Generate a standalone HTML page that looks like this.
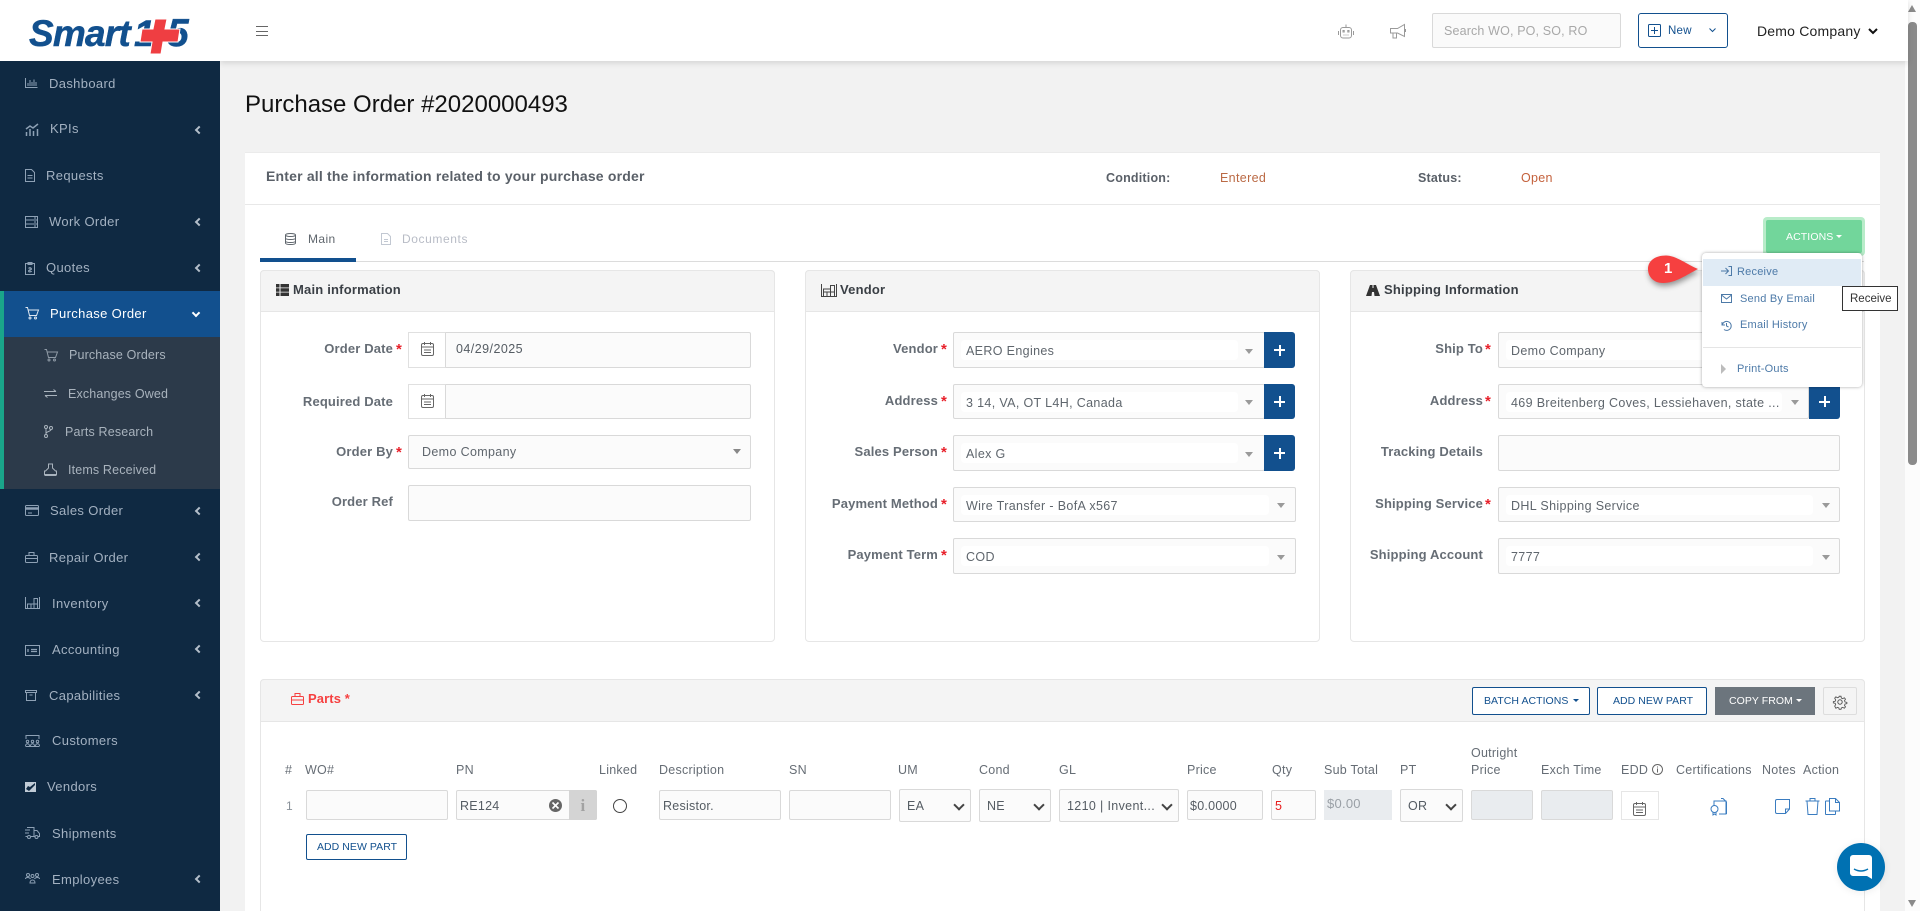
<!DOCTYPE html>
<html lang="en"><head><meta charset="utf-8"><title>Purchase Order #2020000493</title>
<style>
*{box-sizing:border-box}
html,body{margin:0;padding:0;width:1920px;height:911px;overflow:hidden;background:#f2f2f2;font-family:"Liberation Sans",Arial,sans-serif;font-size:13px;letter-spacing:.25px}
div,span{position:absolute}
#root{left:0;top:0;width:1920px;height:911px;overflow:hidden;background:#f2f2f2}
.t{white-space:nowrap;line-height:16px;margin-top:-8px}
svg{position:absolute;fill:none;stroke:currentColor;stroke-width:1;overflow:visible}
.sb{color:#a3b1c1;font-size:13px;letter-spacing:.35px}
.sic{color:#8ea1b5}
.sub{color:#a9b3bd;font-size:12.5px;letter-spacing:.15px}
.ch{width:6px;height:6px;border-left:2px solid #b4bfca;border-bottom:2px solid #b4bfca;transform:rotate(45deg)}
.lab{color:#666d75;font-weight:bold;font-size:13px;text-align:right;letter-spacing:.15px}
.star{color:#e8202a;font-weight:bold;font-size:15px;margin-top:-7px;margin-left:-1px}
.inp{background:#fbfbfb;border:1px solid #d9d9d9;border-radius:2px}
.chip{background:#fff;border-radius:4px;height:20px}
.val{color:#5f666d;font-size:12.5px;letter-spacing:.35px}
.arr{width:0;height:0;border-left:4.5px solid transparent;border-right:4.5px solid transparent;border-top:5px solid #9a9a9a}
.plus{background:#12508e;border-radius:0 3px 3px 0;color:#fff}
.plus:before{content:"";position:absolute;left:50%;top:50%;width:11px;height:2px;margin:-1px 0 0 -5.5px;background:#fff}
.plus:after{content:"";position:absolute;left:50%;top:50%;width:2px;height:11px;margin:-5.5px 0 0 -1px;background:#fff}
.panel{background:#fff;border:1px solid #e6e6e6;border-radius:4px}
.phead{background:#f4f4f4;border:1px solid #e6e6e6;border-radius:4px 4px 0 0}
.ptitle{color:#3a3f45;font-weight:bold;font-size:13px;letter-spacing:.2px}
.th{color:#666d75;font-size:12.5px;letter-spacing:.25px}
.rv{color:#555c63;font-size:12.5px}
.sel:after{content:"";position:absolute;right:7px;top:11px;width:6px;height:6px;border-right:2px solid #444;border-bottom:2px solid #444;transform:rotate(45deg)}
.btn{border:1px solid #12508e;border-radius:2px;background:#fff;color:#12508e;font-size:10.5px;letter-spacing:.05px}
.m{color:#4d7aa8;font-size:11px;letter-spacing:.22px}
.car{width:0;height:0;border-left:3px solid transparent;border-right:3px solid transparent;border-top:3.5px solid currentColor}
</style></head><body>
<div id="root">

<!-- main background right scrollbar -->
<div style="left:1905px;top:0;width:15px;height:911px;background:#fcfcfc"></div>
<div style="left:1908px;top:22px;width:9px;height:443px;background:#8a8a8a;border-radius:4px"></div>
<div class="arr" style="left:1908px;top:5px;border-top:0;border-bottom:7px solid #8a8a8a;border-left-width:4.5px;border-right-width:4.5px"></div>
<div class="arr" style="left:1908px;top:900px;border-top:7px solid #8a8a8a"></div>

<!-- top bar -->
<div style="left:220px;top:0;width:1688px;height:61px;background:#fff;box-shadow:0 2px 6px rgba(0,0,0,.13)"></div>
<div style="left:256px;top:26px;width:12px;height:10px;border-top:1px solid #666;border-bottom:1px solid #666"></div>
<div style="left:256px;top:31px;width:12px;height:1px;background:#666"></div>
<svg style="left:1338px;top:24px;color:#9a9a9a" width="16" height="15" viewBox="0 0 16 15"><rect x="2.500" y="3.500" width="11" height="10.500" rx="2.500"/><path d="M8 3.500V.5M.5 7v4M15.500 7v4"/><path d="M5 6.500h1.200v1.500H5zM9.800 6.500H11v1.500H9.800zM5.500 11h1M7.500 11h1M9.500 11h1" stroke-width="1"/></svg>
<svg style="left:1390px;top:24px;color:#9a9a9a" width="16" height="15" viewBox="0 0 16 15"><path d="M.5 4.500h7l7-4v12l-7-3.500h-7zM3 9v5h3.500V9.500M15.500 5v3"/></svg>
<div class="inp" style="left:1432px;top:13px;width:189px;height:35px;background:#fafafa"></div>
<div class="t" style="left:1444px;top:31px;color:#a8a8a8;font-size:12.5px;letter-spacing:.15px">Search WO, PO, SO, RO</div>
<div class="btn" style="left:1638px;top:13px;width:90px;height:35px;border-radius:3px"></div>
<svg style="left:1648px;top:24px;color:#12508e" width="13" height="13" viewBox="0 0 13 13"><rect x=".5" y=".5" width="12" height="12" rx="1"/><path d="M6.500 3v7M3 6.500h7"/></svg>
<div class="t" style="left:1668px;top:31px;color:#12508e;font-size:11.5px">New</div>
<svg style="left:1709px;top:28px;color:#12508e" width="7" height="5" viewBox="0 0 7 5"><path d="M.5 .5l3 3 3-3"/></svg>
<div class="t" style="left:1757px;top:31px;color:#222;font-size:14px;letter-spacing:.2px">Demo Company</div>
<svg style="left:1868px;top:28px;color:#111;stroke-width:2" width="10" height="7" viewBox="0 0 10 7"><path d="M1 1l4 4 4-4"/></svg>

<!-- sidebar -->
<div style="left:0;top:0;width:220px;height:911px;background:#0f2942"></div>
<div style="left:0;top:0;width:220px;height:61px;background:#fff"></div>
<svg style="left:25px;top:15px;stroke:none" width="175" height="42" viewBox="25 15 175 42">
<text x="29" y="46" fill="#12508e" stroke="#12508e" stroke-width=".5" font-family="Liberation Sans" font-weight="bold" font-style="italic" font-size="37" letter-spacing="-.8">Smart</text>
<text x="134" y="46" fill="#12508e" stroke="#12508e" stroke-width=".5" font-family="Liberation Sans" font-weight="bold" font-style="italic" font-size="37">1</text>
<text x="167" y="46" fill="#12508e" stroke="#12508e" stroke-width=".5" font-family="Liberation Sans" font-weight="bold" font-style="italic" font-size="39">5</text>
<path d="M155 19h12l-2 10h15l-2 13h-15l-2 12h-11l2-12h-12l2-13h11z" fill="#ef3e42" stroke="#fff" stroke-width="1"/>
</svg>

<div class="t sb" style="left:49px;top:84px">Dashboard</div>
<svg class="sic" style="left:25px;top:78px" width="13" height="10" viewBox="0 0 13 10"><path d="M.5 0v9.500h12M3 8V5M5 8V2M7 8V4M9 8V1.500M11 8V4"/></svg>
<div class="t sb" style="left:50px;top:129px">KPIs</div>
<svg class="sic" style="left:25px;top:123px" width="15" height="13" viewBox="0 0 15 13"><path d="M1 6l4-3 3 2 5-4M1.500 13V9M5 13V6M8.500 13V8M12.500 13V6" stroke-width="1.500"/></svg>
<div class="t sb" style="left:46px;top:176px">Requests</div>
<svg class="sic" style="left:25px;top:169px" width="10" height="13" viewBox="0 0 10 13"><path d="M.5 .5h6l3 3v9h-9zM2.500 6.500h5M2.500 9h5"/></svg>
<div class="t sb" style="left:49px;top:222px">Work Order</div>
<svg class="sic" style="left:25px;top:216px" width="13" height="12" viewBox="0 0 13 12"><rect x=".5" y=".5" width="12" height="11"/><path d="M.5 4h12M.5 8h12M9 2h2M9 6h2M9 10h2"/></svg>
<div class="t sb" style="left:46px;top:268px">Quotes</div>
<svg class="sic" style="left:25px;top:262px" width="10" height="13" viewBox="0 0 10 13"><path d="M.5 1.500h9v11h-9zM3 .5h4v2H3zM5 5v5M3.500 6.500c0-1 3-1 3 .5s-3 .5-3 2 3 1 3 0"/></svg>
<div class="ch" style="left:196px;top:127px"></div>
<div class="ch" style="left:196px;top:219px"></div>
<div class="ch" style="left:196px;top:265px"></div>

<div style="left:0;top:291px;width:4px;height:198px;background:#1aa58a"></div>
<div style="left:4px;top:291px;width:216px;height:46px;background:#12508e"></div>
<div style="left:4px;top:337px;width:216px;height:152px;background:#2c3a4a"></div>
<div class="t" style="left:50px;top:314px;color:#fff;font-size:13px;letter-spacing:.35px">Purchase Order</div>
<svg style="left:25px;top:307px;color:#dfe8f2" width="14" height="13" viewBox="0 0 14 13"><path d="M.5 .5h2l2 8h7l2-5.500H3.500"/><circle cx="5" cy="11" r="1"/><circle cx="10.500" cy="11" r="1"/></svg>
<div style="left:193px;top:310px;width:6px;height:6px;border-right:2px solid #fff;border-bottom:2px solid #fff;transform:rotate(45deg)"></div>
<div class="t sub" style="left:69px;top:355px">Purchase Orders</div>
<svg style="left:44px;top:349px;color:#8f9aa6" width="14" height="13" viewBox="0 0 14 13"><path d="M.5 .5h2l2 8h7l2-5.500H3.500"/><circle cx="5" cy="11" r="1"/><circle cx="10.500" cy="11" r="1"/></svg>
<div class="t sub" style="left:68px;top:393.500px">Exchanges Owed</div>
<svg style="left:44px;top:389px;color:#a9b3bd" width="13" height="9" viewBox="0 0 13 9"><path d="M0 2.500h12M9.500 .5l2.500 2M13 6.500H1M3.500 8.500L1 6.500"/></svg>
<div class="t sub" style="left:65px;top:431.500px">Parts Research</div>
<svg style="left:44px;top:425px;color:#a9b3bd" width="9" height="13" viewBox="0 0 9 13"><circle cx="2" cy="2" r="1.500"/><circle cx="2" cy="11" r="1.500"/><circle cx="7" cy="3" r="1.500"/><path d="M2 3.500v6M7 4.500c0 2-5 2-5 4"/></svg>
<div class="t sub" style="left:68px;top:470px">Items Received</div>
<svg style="left:44px;top:463px;color:#a9b3bd" width="13" height="13" viewBox="0 0 13 13"><path d="M4.500 1h4v4l3 3h1v3.500H.5V8h1l3-3zM.5 12.500h12"/></svg>

<div class="t sb" style="left:50px;top:511px">Sales Order</div>
<svg class="sic" style="left:25px;top:505px" width="14" height="11" viewBox="0 0 14 11"><rect x=".5" y=".5" width="13" height="10" rx="1"/><path d="M.5 3.500h13" stroke-width="2.500"/><path d="M3 8h4"/></svg>
<div class="t sb" style="left:49px;top:557.500px">Repair Order</div>
<svg class="sic" style="left:25px;top:552px" width="13" height="11" viewBox="0 0 13 11"><rect x=".5" y="3.500" width="12" height="7" rx="1"/><path d="M4 3.500V.5h5v3M.5 6.500h12"/></svg>
<div class="t sb" style="left:52px;top:603.500px">Inventory</div>
<svg class="sic" style="left:25px;top:597px" width="15" height="12" viewBox="0 0 15 12"><path d="M.5 0v12M14.500 0v12M.5 11.500h14M2.500 11V7h10v4M6 7v4M9 7v4M9 7V1.500h3.500V7"/></svg>
<div class="t sb" style="left:52px;top:650px">Accounting</div>
<svg class="sic" style="left:25px;top:645px" width="15" height="11" viewBox="0 0 15 11"><rect x=".5" y=".5" width="14" height="10"/><path d="M3 4v3M3 4v3M6 4.500h6M6 6.500h6" stroke-width="1.300"/></svg>
<div class="t sb" style="left:49px;top:695.500px">Capabilities</div>
<svg class="sic" style="left:25px;top:690px" width="12" height="11" viewBox="0 0 12 11"><path d="M.5 .5h11v2h-11zM1.500 2.500v8h9v-8M4.500 5h3"/></svg>
<div class="t sb" style="left:52px;top:741px">Customers</div>
<svg class="sic" style="left:25px;top:735px" width="15" height="12" viewBox="0 0 15 12"><path d="M1 4V.5h13V4"/><circle cx="2.500" cy="6.500" r="1.200"/><circle cx="7.500" cy="6.500" r="1.200"/><circle cx="12.500" cy="6.500" r="1.200"/><path d="M.5 11c0-3 4-3 4 0M5.500 11c0-3 4-3 4 0M10.500 11c0-3 4-3 4 0M.5 11.500h14"/></svg>
<div class="t sb" style="left:47px;top:787px">Vendors</div>
<svg style="left:25px;top:782px;stroke:none" width="11" height="10" viewBox="0 0 11 10"><rect width="11" height="10" fill="#c0cbd6"/><path d="M1 7l3 2 6-6v-2l-5 4-2-1z" fill="#0f2942"/></svg>
<div class="t sb" style="left:52px;top:833.500px">Shipments</div>
<svg class="sic" style="left:25px;top:827px" width="15" height="12" viewBox="0 0 15 12"><path d="M2 .5h7v9H6M2 9.500H.5M9 3.500h3l2.500 3v3H13M10 9.500H9M0 3h5M0 6h4"/><circle cx="4" cy="10" r="1.500"/><circle cx="11.500" cy="10" r="1.500"/></svg>
<div class="t sb" style="left:52px;top:879.500px">Employees</div>
<svg class="sic" style="left:25px;top:873px" width="15" height="11" viewBox="0 0 15 11"><circle cx="3" cy="2" r="1.500"/><circle cx="7.500" cy="3" r="1.500"/><circle cx="12" cy="2" r="1.500"/><path d="M.5 6c0-2 4-2 5 0M9.500 6c1-2 5-2 5 0M5 10c0-4 5-4 5 0z"/></svg>
<div class="ch" style="left:196px;top:508px"></div>
<div class="ch" style="left:196px;top:554px"></div>
<div class="ch" style="left:196px;top:600px"></div>
<div class="ch" style="left:196px;top:646px"></div>
<div class="ch" style="left:196px;top:692px"></div>
<div class="ch" style="left:196px;top:876px"></div>

<!-- page -->
<div class="t" style="left:245px;top:105px;color:#111;font-size:24px;line-height:30px;margin-top:-15px;letter-spacing:0">Purchase Order #2020000493</div>
<div style="left:245px;top:152px;width:1635px;height:759px;background:#fff;border-top:1px solid #ebebeb"></div>
<div style="left:245px;top:204px;width:1635px;height:1px;background:#e8e8e8"></div>
<div class="t" style="left:266px;top:176px;color:#5a6068;font-weight:bold;font-size:14px;letter-spacing:.19px">Enter all the information related to your purchase order</div>
<div class="t" style="left:1106px;top:178px;color:#5a6068;font-weight:bold;font-size:12.500px;letter-spacing:.2px">Condition:</div>
<div class="t" style="left:1220px;top:178px;color:#bb6a45;font-size:12.500px;letter-spacing:.35px">Entered</div>
<div class="t" style="left:1418px;top:178px;color:#5a6068;font-weight:bold;font-size:12.500px;letter-spacing:.2px">Status:</div>
<div class="t" style="left:1521px;top:178px;color:#c4613c;font-size:12.500px;letter-spacing:.3px">Open</div>

<!-- tabs -->
<div style="left:260px;top:261px;width:1604px;height:1px;background:#dcdcdc"></div>
<div style="left:260px;top:258px;width:96px;height:4px;background:#12508e"></div>
<svg style="left:285px;top:233px;color:#5f666d" width="11" height="12" viewBox="0 0 11 12"><ellipse cx="5.500" cy="2" rx="5" ry="1.500"/><path d="M.5 2v8c0 2 10 2 10 0V2M.5 5c0 2 10 2 10 0M.5 8c0 2 10 2 10 0"/></svg>
<div class="t" style="left:308px;top:239px;color:#5f666d;font-size:12px;letter-spacing:.4px">Main</div>
<svg style="left:381px;top:233px;color:#c2c8d2" width="10" height="12" viewBox="0 0 10 12"><path d="M.5 .5h6l3 3v8h-9zM3 6.500h4M3 8.500h4"/></svg>
<div class="t" style="left:402px;top:239px;color:#b8bcc6;font-size:12px;letter-spacing:.6px">Documents</div>

<!-- Main information -->
<div class="panel" style="left:260px;top:270px;width:515px;height:372px"></div>
<div class="phead" style="left:260px;top:270px;width:515px;height:42px"></div>
<svg style="left:276px;top:284px;stroke:none;fill:#333" width="13" height="12" viewBox="0 0 13 12"><path d="M0 0h3.500v3.500H0zM4.500 0H13v3.500H4.500zM0 4.300h3.500v3.400H0zM4.500 4.300H13v3.400H4.500zM0 8.500h3.500V12H0zM4.500 8.500H13V12H4.500z"/></svg>
<div class="t ptitle" style="left:293px;top:290px">Main information</div>

<div class="t lab" style="left:270px;width:123px;top:349px">Order Date</div><div class="t star" style="left:397px;top:349px">*</div>
<div class="inp" style="left:408px;top:332px;width:343px;height:36px"></div>
<div style="left:408px;top:332px;width:38px;height:36px;background:#fff;border:1px solid #e0e0e0;border-right:1px solid #d9d9d9"></div>
<svg style="left:421px;top:342px;color:#666" width="13" height="14" viewBox="0 0 13 14"><rect x=".5" y="1.500" width="12" height="12" rx="1.500"/><path d="M.5 5h12M3.500 0v3M9.500 0v3M3 8h7M3 10.500h7" /></svg>
<div class="t val" style="left:456px;top:349px;color:#555c63;letter-spacing:.45px">04/29/2025</div>

<div class="t lab" style="left:270px;width:123px;top:401.500px">Required Date</div>
<div class="inp" style="left:408px;top:384px;width:343px;height:35px"></div>
<div style="left:408px;top:384px;width:38px;height:35px;background:#fff;border:1px solid #e0e0e0;border-right:1px solid #d9d9d9"></div>
<svg style="left:421px;top:394px;color:#666" width="13" height="14" viewBox="0 0 13 14"><rect x=".5" y="1.500" width="12" height="12" rx="1.500"/><path d="M.5 5h12M3.500 0v3M9.500 0v3M3 8h7M3 10.500h7"/></svg>

<div class="t lab" style="left:270px;width:123px;top:452px">Order By</div><div class="t star" style="left:397px;top:452px">*</div>
<div class="inp" style="left:408px;top:435px;width:343px;height:34px"></div>
<div class="t val" style="left:422px;top:452px">Demo Company</div>
<div class="arr" style="left:733px;top:449px;border-top-color:#888"></div>

<div class="t lab" style="left:270px;width:123px;top:502px">Order Ref</div>
<div class="inp" style="left:408px;top:485px;width:343px;height:36px"></div>

<!-- Vendor -->
<div class="panel" style="left:805px;top:270px;width:515px;height:372px"></div>
<div class="phead" style="left:805px;top:270px;width:515px;height:42px"></div>
<svg style="left:821px;top:284px;color:#444" width="16" height="13" viewBox="0 0 16 13"><path d="M.5 0v13M15.500 0v13M.5 12.500h15M2.500 12V8h11v4M6 8v4M9.500 8v4M9.500 8V1.500h4V8M2.500 8V5h7"/></svg>
<div class="t ptitle" style="left:840px;top:290px">Vendor</div>

<div class="t lab" style="left:810px;width:128px;top:349px">Vendor</div><div class="t star" style="left:942px;top:349px">*</div>
<div class="inp" style="left:953px;top:332px;width:312px;height:36px"></div>
<div class="chip" style="left:961px;top:340px;width:277px"></div>
<div class="t val" style="left:966px;top:351px">AERO Engines</div>
<div class="arr" style="left:1245px;top:349px"></div>
<div class="plus" style="left:1264px;top:332px;width:31px;height:36px"></div>

<div class="t lab" style="left:810px;width:128px;top:401px">Address</div><div class="t star" style="left:942px;top:401px">*</div>
<div class="inp" style="left:953px;top:384px;width:312px;height:35px"></div>
<div class="chip" style="left:961px;top:392px;width:277px"></div>
<div class="t val" style="left:966px;top:402.500px">3 14, VA, OT L4H, Canada</div>
<div class="arr" style="left:1245px;top:400px"></div>
<div class="plus" style="left:1264px;top:384px;width:31px;height:35px"></div>

<div class="t lab" style="left:810px;width:128px;top:452px">Sales Person</div><div class="t star" style="left:942px;top:452px">*</div>
<div class="inp" style="left:953px;top:435px;width:312px;height:36px"></div>
<div class="chip" style="left:961px;top:443px;width:277px"></div>
<div class="t val" style="left:966px;top:453.500px">Alex G</div>
<div class="arr" style="left:1245px;top:452px"></div>
<div class="plus" style="left:1264px;top:435px;width:31px;height:36px"></div>

<div class="t lab" style="left:810px;width:128px;top:504px">Payment Method</div><div class="t star" style="left:942px;top:504px">*</div>
<div class="inp" style="left:953px;top:487px;width:343px;height:35px"></div>
<div class="chip" style="left:961px;top:495px;width:308px"></div>
<div class="t val" style="left:966px;top:505.500px">Wire Transfer - BofA x567</div>
<div class="arr" style="left:1277px;top:503px"></div>

<div class="t lab" style="left:810px;width:128px;top:555px">Payment Term</div><div class="t star" style="left:942px;top:555px">*</div>
<div class="inp" style="left:953px;top:538px;width:343px;height:36px"></div>
<div class="chip" style="left:961px;top:546px;width:308px"></div>
<div class="t val" style="left:966px;top:556.500px">COD</div>
<div class="arr" style="left:1277px;top:555px"></div>

<!-- Shipping -->
<div class="panel" style="left:1350px;top:270px;width:515px;height:372px"></div>
<div class="phead" style="left:1350px;top:270px;width:515px;height:42px"></div>
<svg style="left:1366px;top:285px;stroke:none;fill:#333" width="14" height="11" viewBox="0 0 14 11"><path d="M4 0h2.500v3h1V0H10l4 11H8.500L8 7H6l-.5 4H0z"/></svg>
<div class="t ptitle" style="left:1384px;top:290px">Shipping Information</div>

<div class="t lab" style="left:1360px;width:123px;top:349px">Ship To</div><div class="t star" style="left:1486px;top:349px">*</div>
<div class="inp" style="left:1498px;top:332px;width:342px;height:36px"></div>
<div class="chip" style="left:1506px;top:340px;width:230px"></div>
<div class="t val" style="left:1511px;top:351px">Demo Company</div>

<div class="t lab" style="left:1360px;width:123px;top:401px">Address</div><div class="t star" style="left:1486px;top:401px">*</div>
<div class="inp" style="left:1498px;top:384px;width:311px;height:35px"></div>
<div class="chip" style="left:1506px;top:392px;width:276px"></div>
<div class="t val" style="left:1511px;top:402.500px">469 Breitenberg Coves, Lessiehaven, state ...</div>
<div class="arr" style="left:1791px;top:400px"></div>
<div class="plus" style="left:1809px;top:384px;width:31px;height:35px"></div>

<div class="t lab" style="left:1360px;width:123px;top:452px">Tracking Details</div>
<div class="inp" style="left:1498px;top:435px;width:342px;height:36px"></div>

<div class="t lab" style="left:1360px;width:123px;top:504px">Shipping Service</div><div class="t star" style="left:1486px;top:504px">*</div>
<div class="inp" style="left:1498px;top:487px;width:342px;height:35px"></div>
<div class="chip" style="left:1506px;top:495px;width:307px"></div>
<div class="t val" style="left:1511px;top:505.500px">DHL Shipping Service</div>
<div class="arr" style="left:1822px;top:503px"></div>

<div class="t lab" style="left:1360px;width:123px;top:555px">Shipping Account</div>
<div class="inp" style="left:1498px;top:538px;width:342px;height:36px"></div>
<div class="chip" style="left:1506px;top:546px;width:307px"></div>
<div class="t val" style="left:1511px;top:556.500px">7777</div>
<div class="arr" style="left:1822px;top:555px"></div>

<!-- Parts -->
<div class="panel" style="left:260px;top:679px;width:1605px;height:240px"></div>
<div class="phead" style="left:260px;top:679px;width:1605px;height:43px"></div>
<svg style="left:291px;top:693px;color:#f64040" width="13" height="12" viewBox="0 0 13 12"><rect x=".5" y="3.500" width="12" height="8" rx="1"/><path d="M4 3.500V.5h5v3M.5 7h12"/></svg>
<div class="t" style="left:308px;top:699px;color:#f64040;font-weight:bold;font-size:13px;letter-spacing:.1px">Parts *</div>

<div class="btn" style="left:1472px;top:687px;width:118px;height:28px"></div>
<div class="t" style="left:1484px;top:701px;color:#12508e;font-size:10.500px;letter-spacing:.05px">BATCH ACTIONS</div>
<div class="car" style="left:1573px;top:699px;color:#12508e"></div>
<div class="btn" style="left:1597px;top:687px;width:110px;height:28px"></div>
<div class="t" style="left:1613px;top:701px;color:#12508e;font-size:10.500px;letter-spacing:.05px">ADD NEW PART</div>
<div style="left:1715px;top:687px;width:100px;height:28px;background:#6c757d"></div>
<div class="t" style="left:1729px;top:701px;color:#fff;font-size:10.500px;letter-spacing:.05px">COPY FROM</div>
<div class="car" style="left:1796px;top:699px;color:#fff"></div>
<div style="left:1823px;top:687px;width:34px;height:28px;background:#f4f4f4;border:1px solid #ddd;border-radius:2px"></div>
<svg style="left:1833px;top:695px;color:#555" width="14" height="14" viewBox="0 0 14 14"><circle cx="7" cy="7" r="2.200"/><path d="M6 .5h2l.4 2 1.500.7 1.800-1 1.300 1.500-1.100 1.700.6 1.500 2 .4v1.400l-2 .4-.6 1.500 1.100 1.700-1.300 1.500-1.800-1-1.500.7-.4 1.500H6l-.4-1.500-1.500-.7-1.800 1L1 11.500l1.100-1.700-.6-1.500-2-.4V6.500l2-.4.6-1.500L1 2.700l1.300-1.500 1.800 1 1.500-.7z" transform="translate(.8 .8) scale(.9)"/></svg>

<!-- table head -->
<div class="t th" style="left:285px;top:770px">#</div>
<div class="t th" style="left:305px;top:770px">WO#</div>
<div class="t th" style="left:456px;top:770px">PN</div>
<div class="t th" style="left:599px;top:770px">Linked</div>
<div class="t th" style="left:659px;top:770px">Description</div>
<div class="t th" style="left:789px;top:770px">SN</div>
<div class="t th" style="left:898px;top:770px">UM</div>
<div class="t th" style="left:979px;top:770px">Cond</div>
<div class="t th" style="left:1059px;top:770px">GL</div>
<div class="t th" style="left:1187px;top:770px">Price</div>
<div class="t th" style="left:1272px;top:770px">Qty</div>
<div class="t th" style="left:1324px;top:770px">Sub Total</div>
<div class="t th" style="left:1400px;top:770px">PT</div>
<div class="t th" style="left:1471px;top:753px">Outright</div>
<div class="t th" style="left:1471px;top:770px">Price</div>
<div class="t th" style="left:1541px;top:770px">Exch Time</div>
<div class="t th" style="left:1621px;top:770px">EDD</div>
<svg style="left:1652px;top:764px;color:#666" width="11" height="11" viewBox="0 0 11 11"><circle cx="5.500" cy="5.500" r="5"/><path d="M5.500 4.500v4M5.500 2.500v1"/></svg>
<div class="t th" style="left:1676px;top:770px">Certifications</div>
<div class="t th" style="left:1762px;top:770px">Notes</div>
<div class="t th" style="left:1803px;top:770px">Action</div>

<!-- row -->
<div class="t" style="left:286px;top:806px;color:#8a929a;font-size:12px">1</div>
<div class="inp" style="left:306px;top:790px;width:142px;height:30px"></div>
<div class="inp" style="left:456px;top:790px;width:141px;height:30px"></div>
<div style="left:569px;top:790px;width:28px;height:30px;background:#d4d4d4;border-radius:0 2px 2px 0"></div>
<div class="t rv" style="left:460px;top:806px">RE124</div>
<div style="left:549px;top:799px;width:13px;height:13px;border-radius:50%;background:#666"></div>
<svg style="left:552px;top:802px;color:#fff;stroke-width:1.600" width="7" height="7" viewBox="0 0 7 7"><path d="M.5 .5l6 6M6.500 .5l-6 6"/></svg>
<div class="t" style="left:579px;top:806px;width:8px;text-align:center;color:#a2a2a2;font-weight:bold;font-size:17px;font-family:'Liberation Serif',serif">i</div>
<div style="left:613px;top:799px;width:14px;height:14px;border-radius:50%;border:1px solid #444"></div>
<div class="inp" style="left:659px;top:790px;width:122px;height:30px"></div>
<div class="t rv" style="left:663px;top:806px">Resistor.</div>
<div class="inp" style="left:789px;top:790px;width:102px;height:30px"></div>
<div class="inp sel" style="left:899px;top:789px;width:72px;height:33px"></div>
<div class="t rv" style="left:907px;top:806px">EA</div>
<div class="inp sel" style="left:979px;top:789px;width:72px;height:33px"></div>
<div class="t rv" style="left:987px;top:806px">NE</div>
<div class="inp sel" style="left:1059px;top:789px;width:120px;height:33px"></div>
<div class="t rv" style="left:1067px;top:806px;letter-spacing:.35px">1210 | Invent...</div>
<div class="inp" style="left:1187px;top:790px;width:76px;height:30px"></div>
<div class="t rv" style="left:1190px;top:806px">$0.0000</div>
<div class="inp" style="left:1271px;top:790px;width:45px;height:30px"></div>
<div class="t rv" style="left:1275px;top:806px;color:#e81c1c">5</div>
<div style="left:1324px;top:790px;width:68px;height:30px;background:#e9ecef"></div>
<div class="t rv" style="left:1327px;top:804px;color:#9aa0a6;font-size:13px">$0.00</div>
<div class="inp sel" style="left:1400px;top:789px;width:63px;height:33px"></div>
<div class="t rv" style="left:1408px;top:806px">OR</div>
<div style="left:1471px;top:790px;width:62px;height:30px;background:#e9ecef;border:1px solid #d9d9d9;border-radius:2px"></div>
<div style="left:1541px;top:790px;width:72px;height:30px;background:#e9ecef;border:1px solid #d9d9d9;border-radius:2px"></div>
<div style="left:1621px;top:791px;width:38px;height:29px;background:#fff;border:1px solid #e6e6e6"></div>
<svg style="left:1633px;top:802px;color:#666" width="13" height="14" viewBox="0 0 13 14"><rect x=".5" y="1.500" width="12" height="12" rx="1.500"/><path d="M.5 5h12M3.500 0v3M9.500 0v3M3 8h7M3 10.500h7"/></svg>
<svg style="left:1710px;top:798px;color:#3a7cc0" width="18" height="18" viewBox="0 0 18 18"><path d="M4 8V3h7l5 0v13H9M11 0.500h2l3.500 3.500V16"/><circle cx="4.500" cy="11" r="3.500"/><path d="M3 14v3l1.500-1 1.500 1v-3"/></svg>
<svg style="left:1775px;top:799px;color:#3a7cc0" width="15" height="15" viewBox="0 0 15 15"><path d="M.5 2q0-1.500 1.500-1.500h12.500V10l-4 4.500H2Q.5 14.500.5 13zM10.500 14.500V10h4"/></svg>
<svg style="left:1805px;top:798px;color:#3a7cc0" width="15" height="17" viewBox="0 0 15 17"><path d="M.5 3h14M2 3l1 13.500h9L13 3M5 3V.5h5V3"/></svg>
<svg style="left:1825px;top:798px;color:#3a7cc0" width="15" height="17" viewBox="0 0 15 17"><path d="M4.500 3H1q-.5 0-.5.500V16q0 .5.500 .5h9q.5 0 .5-.5v-3"/><path d="M4.500 .5h6l4 4V13h-10zM10.500 .5v4h4"/></svg>

<div class="btn" style="left:306px;top:834px;width:101px;height:26px"></div>
<div class="t" style="left:317px;top:847px;color:#12508e;font-size:10.500px;letter-spacing:.05px">ADD NEW PART</div>

<!-- Chat -->
<div style="left:1837px;top:843px;width:48px;height:48px;border-radius:50%;background:#0071b2;box-shadow:0 1px 8px rgba(0,0,0,.08)"></div>
<svg style="left:1850px;top:855px;stroke:none" width="22" height="24" viewBox="0 0 22 24"><path d="M3 0h16a3 3 0 0 1 3 3v21l-5-3H3a3 3 0 0 1-3-3V3a3 3 0 0 1 3-3z" fill="#fff"/><path d="M4 14q7 4 14 0" fill="none" stroke="#0071b2" stroke-width="1.500"/></svg>

<!-- Actions -->
<div style="left:1763px;top:217px;width:102px;height:39px;background:#b8ecc9;border-radius:4px"></div>
<div style="left:1766px;top:220px;width:96px;height:33px;background:#72d69b;border-radius:2px"></div>
<div class="t" style="left:1786px;top:237px;color:#fff;font-size:10.500px;letter-spacing:.1px">ACTIONS</div>
<div class="car" style="left:1836px;top:235px;color:#fff"></div>

<div style="left:1702px;top:253px;width:160px;height:134px;background:#fff;border-radius:4px;box-shadow:0 0 3px rgba(0,0,0,.35)"></div>
<div style="left:1703px;top:259px;width:158px;height:27px;background:#e0ebf5"></div>
<svg style="left:1721px;top:266px;color:#4d7aa8" width="11" height="10" viewBox="0 0 11 10"><path d="M0 5h7M4.500 2l3 3-3 3M7.500 .5h3v9h-3"/></svg>
<div class="t m" style="left:1737px;top:272px">Receive</div>
<svg style="left:1721px;top:294px;color:#4d7aa8" width="11" height="9" viewBox="0 0 11 9"><rect x=".5" y=".5" width="10" height="8"/><path d="M.5 1l5 4 5-4"/></svg>
<div class="t m" style="left:1740px;top:299px">Send By Email</div>
<svg style="left:1721px;top:320px;color:#4d7aa8" width="11" height="11" viewBox="0 0 11 11"><path d="M1 2v3h3M1.300 5A4.500 4.500 0 1 1 3 9.500M5.500 3v3l2 1"/></svg>
<div class="t m" style="left:1740px;top:325px">Email History</div>
<div style="left:1703px;top:347px;width:158px;height:1px;background:#e5e5e5"></div>
<div class="arr" style="left:1721px;top:364px;border:0;border-left:5px solid #bcbcbc;border-top:5px solid transparent;border-bottom:5px solid transparent"></div>
<div class="t m" style="left:1737px;top:369px">Print-Outs</div>

<div style="left:1842px;top:286px;width:56px;height:25px;background:#fff;border:1px solid #333"></div>
<div class="t" style="left:1850px;top:299px;color:#333;font-size:11.500px;letter-spacing:0">Receive</div>

<!-- Callout -->
<svg style="left:1648px;top:255px;stroke:none;filter:drop-shadow(1px 3px 3px rgba(0,0,0,.4))" width="51" height="29" viewBox="0 0 51 29"><path d="M18 .5C28 .5 38 9 50 14 38 20 28 28 15 28 6 28 0 22 0 14S7 .5 18 .5z" fill="#f64040"/></svg>
<div class="t" style="left:1664px;top:269px;color:#fff;font-weight:bold;font-size:15px">1</div>

</div>
</body></html>
